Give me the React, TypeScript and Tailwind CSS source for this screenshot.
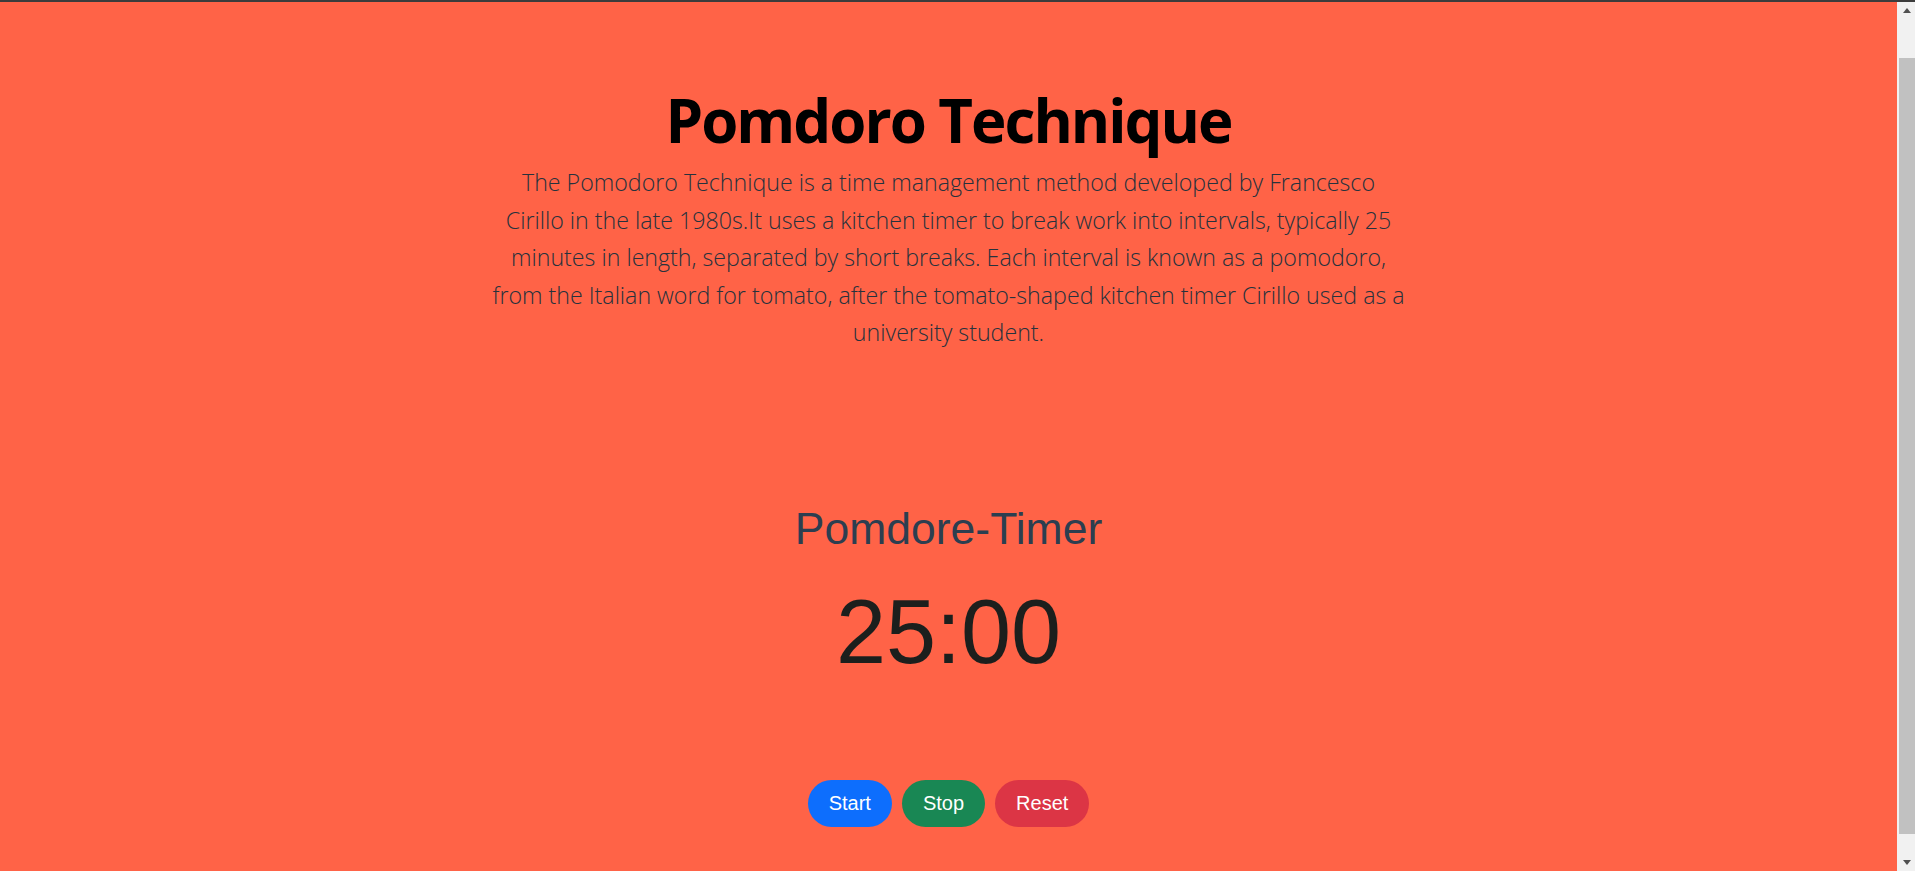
export default function App() {
  const buttons = [
    { label: 'Start', className: 'bg-[#0d6efd]' },
    { label: 'Stop', className: 'bg-[#198754]' },
    { label: 'Reset', className: 'bg-[#dc3545]' },
  ];

  return (
    <div className="flex h-[871px] flex-col overflow-hidden bg-[#ff6347]">
      <div className="h-[2px] shrink-0 bg-[#3c3c3c]" />
      <div className="flex min-h-0 flex-1">
        <main className="min-w-0 flex-1 overflow-hidden">
          <section className="flex flex-col items-center pt-[82px]">
            <h1 className="font-['Open_Sans',sans-serif] text-[60px] font-bold leading-[1.2] tracking-[-2px] text-black">
              Pomdoro Technique
            </h1>
            <p className="mt-[8px] w-[915px] text-center font-['Open_Sans',sans-serif] text-[23.2px] font-light leading-[37.5px] text-[#26323d]">
              The Pomodoro Technique is a time management method developed by Francesco Cirillo in the late 1980s.It uses a
              kitchen timer to break work into intervals, typically 25 minutes in length, separated by short breaks. Each
              interval is known as a pomodoro, from the Italian word for tomato, after the tomato-shaped kitchen timer
              Cirillo used as a university student.
            </p>
          </section>

          <section className="mt-[150px] flex flex-col items-center font-['Liberation_Sans',Arial,sans-serif]">
            <h2 className="text-[44.5px] leading-[1.2] text-[#2c3e50]">Pomdore-Timer</h2>
            <div className="mt-[32px] text-[90px] leading-none text-[#1c1f1d]">25:00</div>
            <div className="mt-[103px] flex gap-[10px]">
              {buttons.map((b) => (
                <button
                  key={b.label}
                  className={`h-[47px] rounded-full px-[21px] text-[20px] text-white ${b.className}`}
                >
                  {b.label}
                </button>
              ))}
            </div>
          </section>
        </main>

        {/* scrollbar */}
        <aside className="flex w-[18px] shrink-0 flex-col bg-[#f1f1f1]">
          <div className="flex h-[17px] items-center justify-center pl-[2px]">
            <div className="h-0 w-0 border-x-[4.5px] border-b-[5px] border-x-transparent border-b-[#505050]" />
          </div>
          <div className="flex min-h-0 flex-1 flex-col pt-[39px] pb-[20px] pl-[2px]">
            <div className="flex-1 bg-[#c1c1c1]" />
          </div>
          <div className="flex h-[17px] items-center justify-center pl-[2px]">
            <div className="h-0 w-0 border-x-[4.5px] border-t-[5px] border-x-transparent border-t-[#505050]" />
          </div>
        </aside>
      </div>
    </div>
  );
}
